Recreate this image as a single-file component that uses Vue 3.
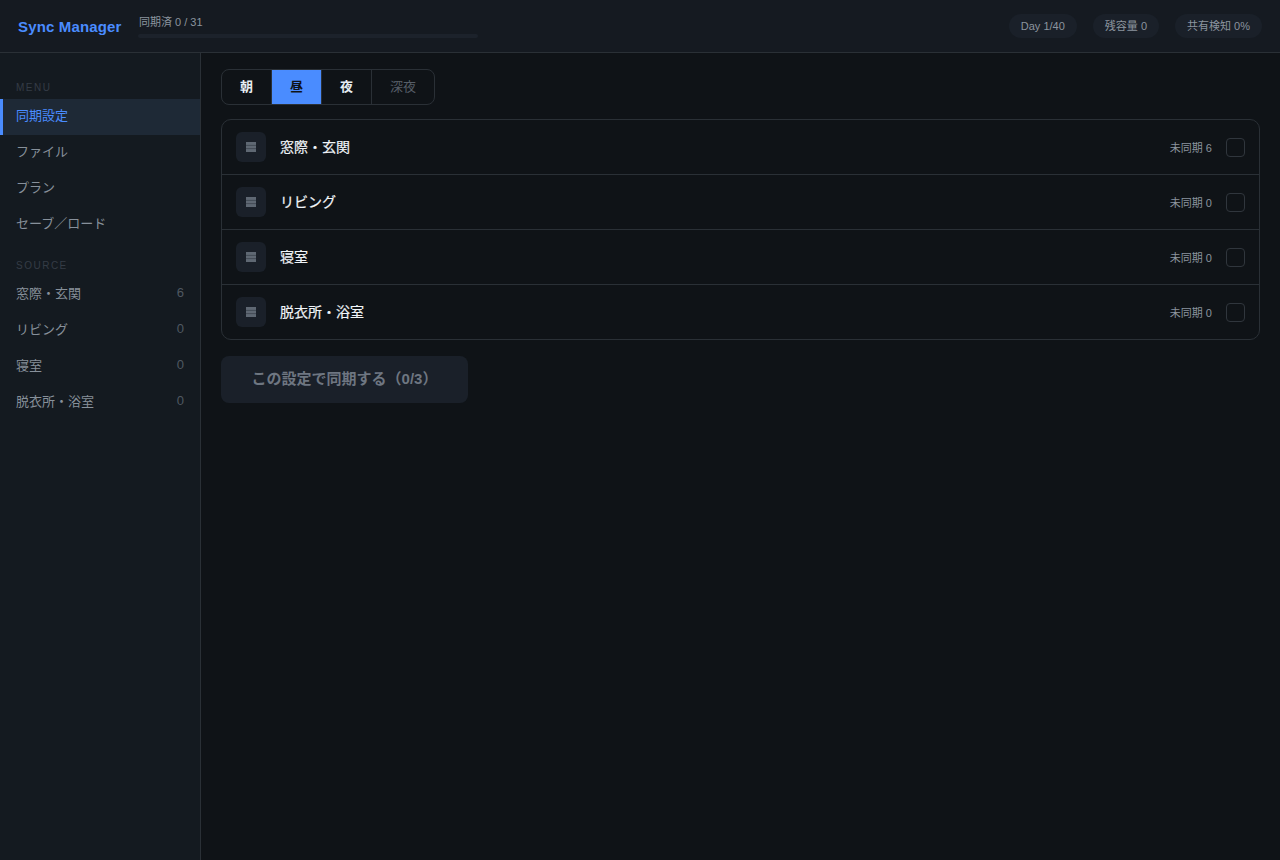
<script setup>
const menu = ['同期設定', 'ファイル', 'プラン', 'セーブ／ロード']
const sources = [
  { name: '窓際・玄関', count: 6 },
  { name: 'リビング', count: 0 },
  { name: '寝室', count: 0 },
  { name: '脱衣所・浴室', count: 0 },
]
const tabs = ['朝', '昼', '夜', '深夜']
const stats = ['Day 1/40', '残容量 0', '共有検知 0%']
</script>

<template>
  <div class="app">
    <header class="top">
      <div class="logo">Sync Manager</div>
      <div class="progress">
        <div class="progress-label">同期済 0 / 31</div>
        <div class="progress-track"></div>
      </div>
      <div class="stats">
        <span v-for="s in stats" :key="s" class="stat">{{ s }}</span>
      </div>
    </header>
    <div class="body">
      <aside class="side">
        <div class="side-title">MENU</div>
        <div v-for="(m, i) in menu" :key="m" class="nav" :class="{ active: i === 0 }"><span>{{ m }}</span></div>
        <div class="side-title second">SOURCE</div>
        <div v-for="s in sources" :key="s.name" class="nav src">
          <span>{{ s.name }}</span><span class="num">{{ s.count }}</span>
        </div>
      </aside>
      <main class="main">
        <div class="tabs">
          <button v-for="(t, i) in tabs" :key="t" class="tab" :class="{ on: i === 1, off: i === 3 }">{{ t }}</button>
        </div>
        <div class="list">
          <div v-for="s in sources" :key="s.name" class="row">
            <div class="icon">
              <svg width="10" height="10" viewBox="0 0 10 10"><rect width="10" height="10" fill="#5f6873" /><path stroke="#3c444e" stroke-width="0.8" d="M0 3.4h10M0 6.6h10" /></svg>
            </div>
            <div class="row-name">{{ s.name }}</div>
            <div class="row-count">未同期 {{ s.count }}</div>
            <div class="check"></div>
          </div>
        </div>
        <button class="go">この設定で同期する（0/3）</button>
      </main>
    </div>
  </div>
</template>

<style>
html, body { margin: 0; background: #0f1317; }
</style>

<style scoped>
.app {
  width: 1280px;
  height: 860px;
  display: flex;
  flex-direction: column;
  background: #0f1317;
  font-family: "Liberation Sans", "Noto Sans CJK JP", sans-serif;
  overflow: hidden;
}
.top {
  height: 52px;
  flex: none;
  border-bottom: 1px solid #2a3036;
  background: #151a21;
  display: flex;
  align-items: center;
  padding: 0 18px;
}
.logo { font-size: 15px; font-weight: 700; letter-spacing: 0.15px; color: #4a8cff; width: 120px; white-space: nowrap; }
.progress { width: 340px; display: flex; flex-direction: column; gap: 4px; }
.progress-label { font-size: 11px; line-height: 16px; color: #8b949e; padding-left: 1px; }
.progress-track { height: 4px; border-radius: 2px; background: #1c222b; }
.stats { margin-left: auto; display: flex; gap: 16px; }
.stat { font-size: 11px; line-height: 16px; color: #8b949e; background: #1a2029; padding: 4px 12px; border-radius: 12px; }
.body { flex: 1; display: flex; min-height: 0; }
.side {
  width: 200px;
  flex: none;
  background: #141a20;
  border-right: 1px solid #2a3036;
  padding-top: 28px;
}
.side-title { font-size: 10px; line-height: 14px; letter-spacing: 1.5px; color: #343c46; padding: 0 16px; margin-bottom: 4px; }
.side-title.second { margin-top: 16px; margin-bottom: 4px; }
.nav { height: 36px; display: flex; align-items: center; justify-content: space-between; padding: 0 16px; font-size: 13px; color: #87909a; box-sizing: border-box; }
.nav span:first-child { margin-top: -6px; }
.nav.active { color: #4a8cff; background: #1e2936; border-left: 3px solid #4a8cff; padding-left: 13px; }
.num { color: #4f5861; font-size: 13px; margin-top: -5px; }
.main { flex: 1; padding: 16px 20px; min-width: 0; }
.tabs { display: inline-flex; border: 1px solid #2a3036; border-radius: 8px; overflow: hidden; vertical-align: top; }
.tab { height: 34px; width: 50px; padding: 0 0 4px; border: 0; border-right: 1px solid #2a3036; background: transparent; color: #e6edf3; font: 700 13px "Liberation Sans", "Noto Sans CJK JP", sans-serif; }
.tab.on { background: #4a8cff; color: #0f1317; background-clip: padding-box; }
.tab.off { width: 62px; border-right: 0; color: #565e68; font-weight: 400; }
.list { margin-top: 14px; border: 1px solid #2a3036; border-radius: 10px; overflow: hidden; }
.row { height: 54px; display: flex; align-items: center; padding: 0 14px; border-bottom: 1px solid #2a3036; }
.row:last-child { border-bottom: 0; }
.icon { width: 30px; height: 30px; border-radius: 6px; background: #1a2029; display: flex; align-items: center; justify-content: center; margin-right: 14px; }
.row-name { font-size: 14px; font-weight: 400; -webkit-text-stroke: 0.2px #f0f4f8; color: #f0f4f8; flex: 1; margin-top: -2px; }
.row-count { font-size: 11px; color: #8b949e; margin-right: 14px; }
.check { width: 17px; height: 17px; border: 1px solid #30363d; border-radius: 4px; }
.go { display: block; margin-top: 16px; width: 247px; height: 47px; border: 0; border-radius: 8px; background: #1a2029; color: #6e7681; font: 700 15px "Liberation Sans", "Noto Sans CJK JP", sans-serif; padding: 0 0 4px; }
</style>
